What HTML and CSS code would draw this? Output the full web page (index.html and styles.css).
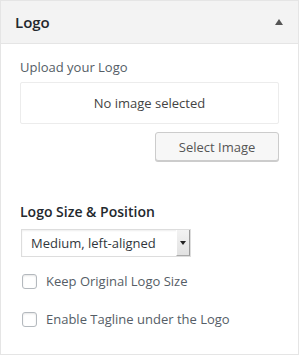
FILE: index.html
```html
<!DOCTYPE html>
<html lang="en">
<head>
    <meta charset="UTF-8">
    <title>Logo</title>
    <link rel="stylesheet" href="styles.css">
</head>
<body>
    <div class="panel">
        <div class="panel-header">
            <h3>Logo</h3>
            <span class="toggle"></span>
        </div>
        <div class="panel-body">
            <div class="field">
                <span class="field-title">Upload your Logo</span>
                <div class="placeholder">No image selected</div>
                <div class="actions">
                    <button class="button">Select Image</button>
                </div>
            </div>
            <div class="field">
                <span class="field-title strong">Logo Size &amp; Position</span>
                <div class="select">
                    <span class="select-value">Medium, left-aligned</span>
                    <span class="select-arrow"></span>
                </div>
            </div>
            <label class="check"><span class="box"></span>Keep Original Logo Size</label>
            <label class="check"><span class="box"></span>Enable Tagline under the Logo</label>
        </div>
    </div>
</body>
</html>
```

FILE: styles.css
```css
body {
    margin: 0;
    font-family: 'Open Sans', sans-serif;
    background: #fff;
}
.panel {
    width: 297px;
    height: 353px;
    border: 1px solid #e5e5e5;
    background: #fff;
}
.panel-header {
    display: flex;
    align-items: center;
    justify-content: space-between;
    height: 42px;
    padding: 0 15px 0 14px;
    background: #f3f3f3;
    border-bottom: 1px solid #e5e5e5;
}
.panel-header h3 {
    margin: 0;
    font-size: 15px;
    font-weight: 600;
    color: #23282d;
}
.toggle {
    width: 0;
    height: 0;
    border-left: 4px solid transparent;
    border-right: 4px solid transparent;
    border-bottom: 6px solid #555;
}
.panel-body {
    padding: 14px 19px 0 19px;
}
.field-title {
    display: block;
    font-size: 13px;
    color: #555d66;
    line-height: 18px;
}
.field-title.strong {
    font-size: 14px;
    font-weight: 600;
    color: #23282d;
}
.placeholder {
    margin-top: 6px;
    height: 40px;
    border: 1px solid #ececec;
    border-radius: 2px;
    display: flex;
    align-items: center;
    justify-content: center;
    font-size: 13px;
    color: #444;
}
.actions {
    display: flex;
    justify-content: flex-end;
    margin-top: 8px;
}
.button {
    width: 124px;
    height: 29px;
    border: 1px solid #ccc;
    border-radius: 3px;
    background: #f7f7f7;
    box-shadow: 0 1px 0 #ccc;
    font-family: 'Open Sans', sans-serif;
    font-size: 13px;
    color: #555;
    padding: 0;
}
.field {
    margin-bottom: 42px;
}
.field + .field {
    margin-bottom: 16px;
}
.select {
    margin-top: 8px;
    margin-left: 1px;
    width: 168px;
    height: 26px;
    border: 1px solid #ddd;
    display: flex;
    align-items: center;
    box-shadow: inset 0 1px 2px rgba(0, 0, 0, 0.07);
}
.select-value {
    flex: 1;
    padding-left: 9px;
    font-size: 13px;
    color: #32373c;
}
.select-arrow {
    width: 14px;
    height: 100%;
    background: linear-gradient(#f2f2f2, #e2e2e2);
    border-left: 1px solid #fff;
    border-right: 1px solid #999;
    border-bottom: 1px solid #aaa;
    box-sizing: border-box;
    display: flex;
    align-items: center;
    justify-content: center;
}
.select-arrow::after {
    content: "";
    border-left: 3px solid transparent;
    border-right: 3px solid transparent;
    border-top: 4px solid #222;
}
.check {
    display: flex;
    align-items: center;
    gap: 9px;
    height: 16px;
    margin-bottom: 22px;
    padding-left: 2px;
    font-size: 13px;
    color: #555d66;
}
.box {
    width: 13px;
    height: 13px;
    border: 1px solid #b4b9be;
    border-radius: 3px;
    box-shadow: inset 0 1px 2px rgba(0, 0, 0, 0.1);
    background: #fff;
}
```
